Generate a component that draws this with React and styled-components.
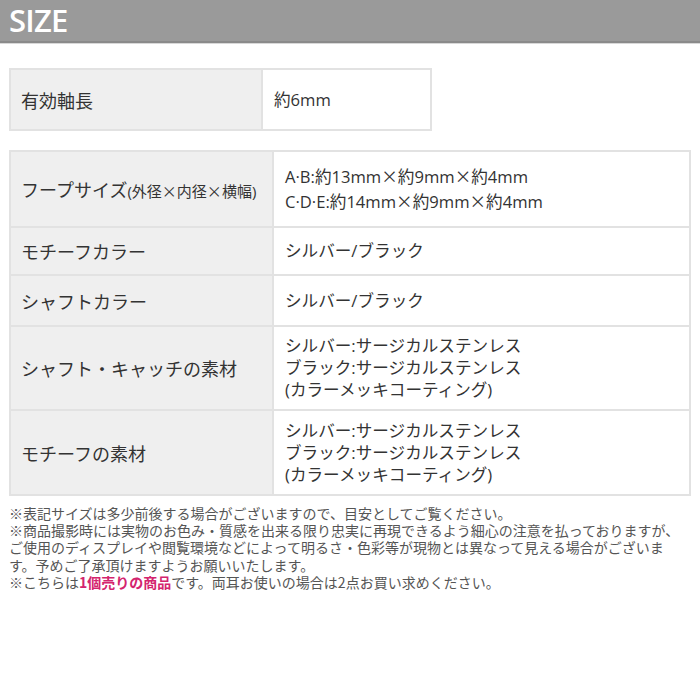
import React from "react";
import styled, { createGlobalStyle } from "styled-components";

const GlobalStyle = createGlobalStyle`
  html, body {
    margin: 0;
    padding: 0;
    background: #ffffff;
  }
  body {
    font-family: "Open Sans", "Noto Sans CJK JP", sans-serif;
    color: #333333;
  }
`;

const Page = styled.div`
  width: 700px;
  height: 700px;
  overflow: hidden;
  background: #ffffff;
`;

const TitleBar = styled.div`
  height: 41px;
  background: #9a9a9a;
  border-bottom: 2px solid #8a8a8a;
  box-shadow: 0 1px 0 #d8d8d8;
  display: flex;
  align-items: center;
  padding-left: 9px;
`;

const Title = styled.h1`
  margin: 0;
  font-family: "Open Sans", sans-serif;
  font-weight: 600;
  font-size: 31px;
  line-height: 1;
  color: #ffffff;
  letter-spacing: -0.8px;
`;

const Content = styled.div`
  padding: 25px 9px 0 9px;
  display: flex;
  flex-direction: column;
`;

const Table = styled.table`
  border-collapse: collapse;
  width: ${(p) => p.$width}px;
  margin-bottom: ${(p) => p.$gap || 0}px;
  border: 2px solid #e2e2e2;
`;

const Row = styled.tr`
  height: ${(p) => p.$h}px;
`;

const Label = styled.th`
  width: ${(p) => p.$w}px;
  background: #efefef;
  border: 2px solid #e2e2e2;
  text-align: left;
  font-weight: 400;
  font-size: 18px;
  color: #333333;
  padding: 0 0 0 10px;
  vertical-align: middle;
  white-space: nowrap;
  box-sizing: border-box;
`;

const Small = styled.span`
  font-size: 15px;
`;

const Times = styled.span`
  font-family: "Noto Sans CJK JP", sans-serif;
`;

const Value = styled.td`
  border: 2px solid #e2e2e2;
  font-size: 16.6px;
  line-height: ${(p) => p.$lh || 22}px;
  color: #333333;
  padding: 0 0 0 11px;
  vertical-align: middle;
  background: #ffffff;
`;

const Notes = styled.div`
  margin-top: 9px;
  font-family: "Noto Sans CJK JP", sans-serif;
  font-size: 14px;
  line-height: 17.2px;
  color: #555555;
  white-space: nowrap;
`;

const Note = styled.p`
  margin: 0;
`;

const Pink = styled.strong`
  color: #d4246e;
  font-weight: 700;
`;

const material = [
  "シルバー:サージカルステンレス",
  "ブラック:サージカルステンレス",
  "(カラーメッキコーティング)",
];

const X = () => <Times>×</Times>;

export default function App() {
  return (
    <Page>
      <GlobalStyle />
      <TitleBar>
        <Title>SIZE</Title>
      </TitleBar>
      <Content>
        <Table $width={423} $gap={19}>
          <tbody>
            <Row $h={61}>
              <Label $w={252}>有効軸長</Label>
              <Value>約6mm</Value>
            </Row>
          </tbody>
        </Table>
        <Table $width={682}>
          <tbody>
            <Row $h={76}>
              <Label $w={263}>
                フープサイズ
                <Small>
                  (外径<X />内径<X />横幅)
                </Small>
              </Label>
              <Value $lh={24}>
                A·B:約13mm<X />約9mm<X />約4mm
                <br />
                C·D·E:約14mm<X />約9mm<X />約4mm
              </Value>
            </Row>
            <Row $h={48}>
              <Label $w={263}>モチーフカラー</Label>
              <Value>シルバー/ブラック</Value>
            </Row>
            <Row $h={51}>
              <Label $w={263}>シャフトカラー</Label>
              <Value>シルバー/ブラック</Value>
            </Row>
            <Row $h={84}>
              <Label $w={263}>シャフト・キャッチの素材</Label>
              <Value>
                {material.map((m) => (
                  <div key={m}>{m}</div>
                ))}
              </Value>
            </Row>
            <Row $h={85}>
              <Label $w={263}>モチーフの素材</Label>
              <Value>
                {material.map((m) => (
                  <div key={m}>{m}</div>
                ))}
              </Value>
            </Row>
          </tbody>
        </Table>
        <Notes>
          <Note>※表記サイズは多少前後する場合がございますので、目安としてご覧ください。</Note>
          <Note>
            ※商品撮影時には実物のお色み・質感を出来る限り忠実に再現できるよう細心の注意を払っておりますが、
            <br />
            ご使用のディスプレイや閲覧環境などによって明るさ・色彩等が現物とは異なって見える場合がございま
            <br />
            す。予めご了承頂けますようお願いいたします。
          </Note>
          <Note>
            ※こちらは<Pink>1個売りの商品</Pink>です。両耳お使いの場合は2点お買い求めください。
          </Note>
        </Notes>
      </Content>
    </Page>
  );
}
